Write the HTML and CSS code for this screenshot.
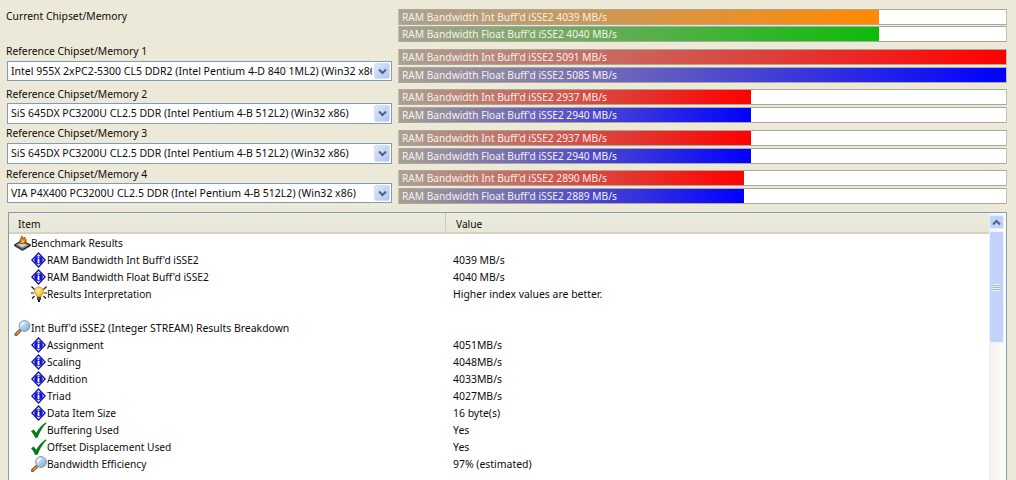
FILE: index.html
```html
<!DOCTYPE html>
<html lang="en">
<head>
<meta charset="utf-8">
<title>Memory Benchmark</title>
<link rel="stylesheet" href="styles.css">
</head>
<body>
<svg class="defs" width="0" height="0" aria-hidden="true">
  <defs>
    <linearGradient id="lens" x1="0" y1="0" x2="1" y2="1"><stop offset="0" stop-color="#eef7ff"/><stop offset="1" stop-color="#6ea4dc"/></linearGradient>
    <radialGradient id="glow" cx=".4" cy=".35" r=".7"><stop offset="0" stop-color="#fff3a0"/><stop offset="1" stop-color="#efaa14"/></radialGradient>
    <symbol id="i-info" viewBox="0 0 16 16">
      <path d="M7.500 0 15 8 7.500 16 0 8Z" fill="#1010b4"/>
      <path d="M7.500 2 13.100 8 7.500 14 1.900 8Z" fill="#fff"/>
      <circle cx="7.500" cy="8" r="4.300" fill="#1414dc"/>
      <rect x="6.600" y="4.500" width="1.800" height="1.400" fill="#fff"/>
      <rect x="6.600" y="6.700" width="1.800" height="4.600" fill="#fff"/>
    </symbol>
    <symbol id="i-bulb" viewBox="0 0 16 16">
      <path d="M.5 .5 3.500 3.500M15.500 .5 12.500 3.500M0 7H2.800M13.200 7H16M1 12.500 3.500 10M15 12.500 12.500 10" stroke="#111" stroke-width="1.100" fill="none"/>
      <path d="M8 1C5 1 3.500 3.200 3.500 5.500c0 2.300 2 3.300 2.500 5.500h4c.5-2.200 2.500-3.200 2.500-5.500C12.500 3.200 11 1 8 1Z" fill="url(#glow)" stroke="#a87c18" stroke-width=".6"/>
      <rect x="6" y="11" width="4" height="3" fill="#4c4c4c"/>
      <rect x="7" y="14" width="2" height="2" fill="#111"/>
    </symbol>
    <symbol id="i-glass" viewBox="0 0 16 16">
      <path d="M5.500 10.500 1.500 14.500" stroke="#9c5f26" stroke-width="3.200" stroke-linecap="round"/>
      <path d="M5.500 10.500 1.800 14.200" stroke="#eec088" stroke-width="1"/>
      <circle cx="10" cy="6" r="5.400" fill="url(#lens)" stroke="#8a96a6" stroke-width="1"/>
      <path d="M6.800 5.800C7.200 4.200 8.400 3 10 2.800" stroke="#fff" stroke-width="1.300" fill="none"/>
    </symbol>
    <symbol id="i-check" viewBox="0 0 16 16">
      <path d="M0 9.300 2.800 7.500 5.200 10.800C7.600 6.500 10.600 2.800 15 .2L15.500 1.200C11.600 4.800 8.800 9.800 6.600 15.800H4C3.200 13.300 1.700 11 0 9.300Z" fill="#0a7a18"/>
    </symbol>
    <symbol id="i-bench" viewBox="0 0 18 16">
      <path d="M.5 10 8 5.500 17.500 10 9 15Z" fill="#85858e" stroke="#15151c" stroke-width="1.100"/>
      <path d="M.5 11 9 16 17.500 11" fill="none" stroke="#3a3a42" stroke-width="1"/>
      <path d="M4 10.200 8.500 8 13.500 10.200 9 12.500Z" fill="#cfcfd6"/>
      <path d="M6 7.600C5.400 5 7.800 3.600 8 .5c1.200.9 1.800 1.900 1.900 3 .6-.4 1-1 1.100-1.800 1.500 1.700 2.600 3.900 1.400 5.800-1.900 1.400-5.100 1.500-6.400.1Z" fill="#e87c08" stroke="#6c3404" stroke-width=".7"/>
      <path d="M8 7.400C8 6 9 5.500 9.400 4.500c.8 1 1.500 2 1 2.900-.7.500-1.700.5-2.400 0Z" fill="#ffdc4c"/>
    </symbol>
    <symbol id="i-chev" viewBox="0 0 9 7">
      <path d="M1 1.500 4.500 5 8 1.500" fill="none" stroke="#4d6185" stroke-width="2"/>
    </symbol>
  </defs>
</svg>

<main class="page">
  <section class="top">
    <div class="refs">
      <div class="label label-current">Current Chipset/Memory</div>
      <div class="ref ref-1">
        <div class="label">Reference Chipset/Memory 1</div>
        <div class="combo combo-20"><span class="combo-text">Intel 955X 2xPC2-5300 CL5 DDR2 (Intel Pentium 4-D 840 1ML2) (Win32 x86)</span><span class="combo-btn"><svg class="chev"><use href="#i-chev"/></svg></span></div>
      </div>
      <div class="ref ref-2">
        <div class="label">Reference Chipset/Memory 2</div>
        <div class="combo"><span class="combo-text">SiS 645DX PC3200U CL2.5 DDR (Intel Pentium 4-B 512L2) (Win32 x86)</span><span class="combo-btn"><svg class="chev"><use href="#i-chev"/></svg></span></div>
      </div>
      <div class="ref ref-3">
        <div class="label">Reference Chipset/Memory 3</div>
        <div class="combo"><span class="combo-text">SiS 645DX PC3200U CL2.5 DDR (Intel Pentium 4-B 512L2) (Win32 x86)</span><span class="combo-btn"><svg class="chev"><use href="#i-chev"/></svg></span></div>
      </div>
      <div class="ref ref-4">
        <div class="label">Reference Chipset/Memory 4</div>
        <div class="combo combo-20"><span class="combo-text">VIA P4X400 PC3200U CL2.5 DDR (Intel Pentium 4-B 512L2) (Win32 x86)</span><span class="combo-btn"><svg class="chev"><use href="#i-chev"/></svg></span></div>
      </div>
    </div>

    <div class="bars">
      <div class="pair pair-a">
        <div class="bar"><div class="fill fill-orange" style="width:79%"></div><span class="bar-text">RAM Bandwidth Int Buff'd iSSE2 4039 MB/s</span></div>
        <div class="bar"><div class="fill fill-green" style="width:79%"></div><span class="bar-text">RAM Bandwidth Float Buff'd iSSE2 4040 MB/s</span></div>
      </div>
      <div class="pair pair-b">
        <div class="bar"><div class="fill fill-red" style="width:100%"></div><span class="bar-text">RAM Bandwidth Int Buff'd iSSE2 5091 MB/s</span></div>
        <div class="bar"><div class="fill fill-blue" style="width:100%"></div><span class="bar-text">RAM Bandwidth Float Buff'd iSSE2 5085 MB/s</span></div>
      </div>
      <div class="pair pair-a">
        <div class="bar"><div class="fill fill-red" style="width:58%"></div><span class="bar-text">RAM Bandwidth Int Buff'd iSSE2 2937 MB/s</span></div>
        <div class="bar"><div class="fill fill-blue" style="width:58%"></div><span class="bar-text">RAM Bandwidth Float Buff'd iSSE2 2940 MB/s</span></div>
      </div>
      <div class="pair pair-b">
        <div class="bar"><div class="fill fill-red" style="width:58%"></div><span class="bar-text">RAM Bandwidth Int Buff'd iSSE2 2937 MB/s</span></div>
        <div class="bar"><div class="fill fill-blue" style="width:58%"></div><span class="bar-text">RAM Bandwidth Float Buff'd iSSE2 2940 MB/s</span></div>
      </div>
      <div class="pair">
        <div class="bar"><div class="fill fill-red" style="width:56.800%"></div><span class="bar-text">RAM Bandwidth Int Buff'd iSSE2 2890 MB/s</span></div>
        <div class="bar"><div class="fill fill-blue" style="width:56.800%"></div><span class="bar-text">RAM Bandwidth Float Buff'd iSSE2 2889 MB/s</span></div>
      </div>
    </div>
  </section>

  <section class="panel">
    <div class="list">
      <div class="head">
        <div class="head-cell head-item">Item</div>
        <div class="head-cell head-value">Value</div>
      </div>
      <div class="rows">
        <div class="row"><div class="cell l0"><svg class="ic ic-wide"><use href="#i-bench"/></svg>Benchmark Results</div><div class="val"></div></div>
        <div class="row"><div class="cell l1"><svg class="ic"><use href="#i-info"/></svg>RAM Bandwidth Int Buff'd iSSE2</div><div class="val">4039 MB/s</div></div>
        <div class="row"><div class="cell l1"><svg class="ic"><use href="#i-info"/></svg>RAM Bandwidth Float Buff'd iSSE2</div><div class="val">4040 MB/s</div></div>
        <div class="row"><div class="cell l1"><svg class="ic"><use href="#i-bulb"/></svg>Results Interpretation</div><div class="val">Higher index values are better.</div></div>
        <div class="row"></div>
        <div class="row"><div class="cell l0 long"><svg class="ic ic-wide"><use href="#i-glass"/></svg>Int Buff'd iSSE2 (Integer STREAM) Results Breakdown</div><div class="val"></div></div>
        <div class="row"><div class="cell l1"><svg class="ic"><use href="#i-info"/></svg>Assignment</div><div class="val">4051MB/s</div></div>
        <div class="row"><div class="cell l1"><svg class="ic"><use href="#i-info"/></svg>Scaling</div><div class="val">4048MB/s</div></div>
        <div class="row"><div class="cell l1"><svg class="ic"><use href="#i-info"/></svg>Addition</div><div class="val">4033MB/s</div></div>
        <div class="row"><div class="cell l1"><svg class="ic"><use href="#i-info"/></svg>Triad</div><div class="val">4027MB/s</div></div>
        <div class="row"><div class="cell l1"><svg class="ic"><use href="#i-info"/></svg>Data Item Size</div><div class="val">16 byte(s)</div></div>
        <div class="row"><div class="cell l1"><svg class="ic"><use href="#i-check"/></svg>Buffering Used</div><div class="val">Yes</div></div>
        <div class="row"><div class="cell l1"><svg class="ic"><use href="#i-check"/></svg>Offset Displacement Used</div><div class="val">Yes</div></div>
        <div class="row"><div class="cell l1"><svg class="ic"><use href="#i-glass"/></svg>Bandwidth Efficiency</div><div class="val">97% (estimated)</div></div>
      </div>
    </div>
    <div class="scrollbar">
      <div class="sb-btn"><svg class="sb-chev" viewBox="0 0 9 7"><path d="M1 5.500 4.500 2 8 5.500" fill="none" stroke="#4d6185" stroke-width="2"/></svg></div>
      <div class="sb-thumb"><span class="grip"></span></div>
    </div>
  </section>
</main>
</body>
</html>
```
FILE: styles.css
```css
* { box-sizing: border-box; }
html, body { margin: 0; height: 480px; overflow: hidden; }
body {
  background: #ece9d8;
  color: #0c0c0c;
  font-family: "Noto Sans", "Liberation Sans", sans-serif;
  font-size: 10.2px;
  line-height: 14px;
}
.defs { position: absolute; }
.page { display: flex; flex-direction: column; height: 480px; }

.top { display: flex; height: 212px; flex: none; }
.refs { width: 398px; flex: none; padding: 9px 0 0 6px; }
.label { height: 14px; white-space: nowrap; font-size: 10.350px; }
.label-current { margin-bottom: 21px; }
.ref { display: flex; flex-direction: column; }
.ref-1 { gap: 3px; margin-bottom: 6px; }
.ref-2 { gap: 2px; margin-bottom: 2px; }
.ref-3 { gap: 3px; margin-bottom: 3px; }
.ref-4 { gap: 2px; }

.combo {
  display: flex;
  align-items: stretch;
  width: 385px;
  height: 21px;
  margin-left: 1px;
  background: #fff;
  border: 1px solid #7f9db9;
}
.combo-20 { height: 20px; }
.combo-text {
  flex: 1;
  min-width: 0;
  padding: 2px 0 0 3px;
  overflow: hidden;
  white-space: nowrap;
  font-size: 10.500px;
}
.combo-btn {
  flex: none;
  width: 16px;
  margin: 1px 1px 1px 2px;
  display: flex;
  align-items: center;
  justify-content: center;
  background: linear-gradient(135deg, #dbe5fb, #b3c6f2);
  border: 1px solid #d5dff6;
  border-radius: 2px;
}
.chev { width: 9px; height: 7px; }

.bars { flex: 1; min-width: 0; padding: 9px 9px 0 0; }
.pair { display: flex; flex-direction: column; gap: 1px; }
.pair-a { margin-bottom: 7px; }
.pair-b { margin-bottom: 6px; }
.bar {
  position: relative;
  height: 16px;
  background: #fff;
  border: 1px solid #aca899;
  border-left-color: #c4c0b0;
  border-right-color: #c4c0b0;
}
.pair:not(:first-child) .bar + .bar { margin-top: 1px; }
.fill { height: 100%; }
.fill-orange { background: linear-gradient(90deg, #aaa193, #ff8a00); }
.fill-green { background: linear-gradient(90deg, #aaa193, #0cbc08); }
.fill-red { background: linear-gradient(90deg, #aaa193, #ff0000); }
.fill-blue { background: linear-gradient(90deg, #aaa193, #0000ff); }
.bar-text {
  position: absolute;
  left: 3px;
  top: 0;
  color: #f4f2ea;
  white-space: nowrap;
}

.panel {
  position: relative;
  display: flex;
  width: 999px;
  height: 280px;
  margin-left: 8px;
  flex: none;
  background: #fff;
  border: 1px solid #7f9db9;
}
.list { flex: 1; min-width: 0; }
.head {
  display: flex;
  height: 21px;
  background: linear-gradient(180deg, #ecebdd, #e8e6d6);
  border-bottom: 2px solid #d6d2c2;
}
.head-cell { padding: 4px 0 0 9px; }
.head-item { width: 437px; border-right: 1px solid #cdc9b8; height: 18px; }
.head-value { padding-left: 10px; }
.rows { display: flex; flex-direction: column; }
.row { display: flex; height: 17px; flex: none; }
.cell { display: flex; align-items: center; width: 438px; flex: none; white-space: nowrap; }
.l0 { padding-left: 6px; }
.l1 { padding-left: 22px; }
.long { font-size: 10.450px; }
.val { padding: 2px 0 0 6px; white-space: nowrap; font-size: 10.450px; }
.ic { width: 16px; height: 16px; flex: none; }
.ic-wide { width: 17px; margin-left: -1px; }

.scrollbar {
  flex: none;
  width: 17px;
  padding: 2px 2px 0 0;
  background: linear-gradient(90deg, #f3f1ec, #fdfdfa);
  display: flex;
  flex-direction: column;
  gap: 2px;
}
.sb-btn {
  height: 14px;
  display: flex;
  align-items: center;
  justify-content: center;
  background: #c1d2fb;
  border: 1px solid #e6edfc;
  border-radius: 2px;
}
.sb-chev { width: 9px; height: 7px; }
.sb-thumb {
  height: 112px;
  display: flex;
  align-items: center;
  justify-content: center;
  background: #c1d2fb;
  border: 1px solid #eef2fd;
  border-radius: 2px;
}
.grip {
  width: 7px;
  height: 7px;
  background: repeating-linear-gradient(180deg, #eef2fd 0 1px, #9db3e0 1px 2px);
}
```
